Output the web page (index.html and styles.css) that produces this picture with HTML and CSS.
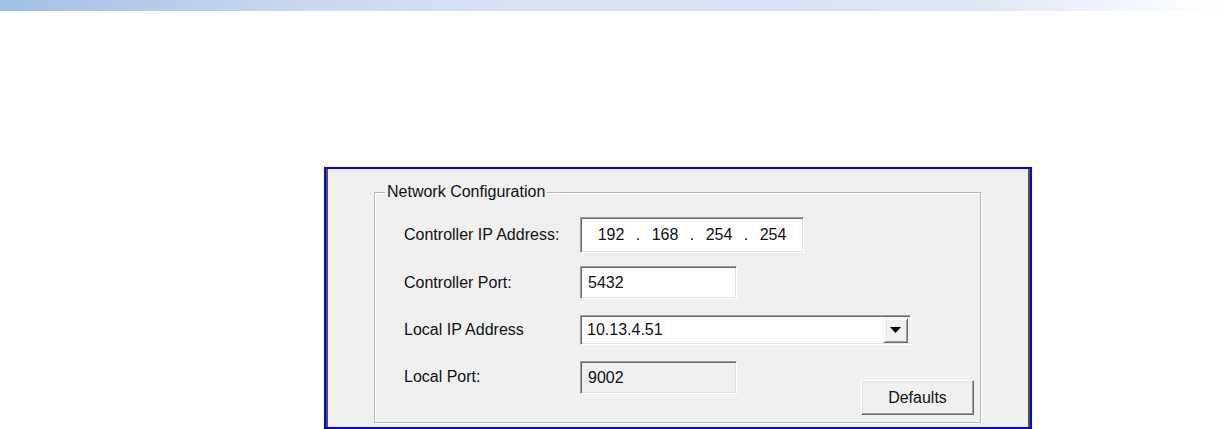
FILE: index.html
```html
<!DOCTYPE html>
<html>
<head>
<meta charset="utf-8">
<link rel="stylesheet" href="styles.css">
</head>
<body>
<div class="topbar"></div>
<div class="frame">
  <div class="frame-inner">
    <fieldset class="group">
      <legend class="legend">Network Configuration</legend>
      <div class="row row-ip">
        <span class="label">Controller IP Address:</span>
        <div class="field ip">
          <span class="oct">192</span><span class="dot">.</span>
          <span class="oct">168</span><span class="dot">.</span>
          <span class="oct">254</span><span class="dot">.</span>
          <span class="oct">254</span>
        </div>
      </div>
      <div class="row row-port">
        <span class="label">Controller Port:</span>
        <div class="field port">5432</div>
      </div>
      <div class="row row-sel">
        <span class="label">Local IP Address</span>
        <div class="field select">
          <span class="sel-text">10.13.4.51</span>
          <span class="drop"><svg width="11" height="6" viewBox="0 0 11 6"><path d="M0 0H11L5.5 6Z" fill="#000"/></svg></span>
        </div>
      </div>
      <div class="row row-local">
        <span class="label">Local Port:</span>
        <div class="field port disabled">9002</div>
        <div class="button">Defaults</div>
      </div>
    </fieldset>
  </div>
</div>
</body>
</html>
```

FILE: styles.css
```css
* { box-sizing: border-box; }
html, body {
  margin: 0;
  padding: 0;
  background: #ffffff;
  overflow: hidden;
}
body {
  font-family: "Liberation Sans", Arial, sans-serif;
  font-size: 16px;
  color: #111;
  width: 1224px;
  height: 429px;
}
.topbar {
  height: 11px;
  width: 1224px;
  background: linear-gradient(to right, #a2bfe6 0%, #c6d5ee 22%, #d8e3f4 42%, #d9e3f5 65%, #dfe8f4 80%, #ecf0fb 88%, #f6f9fe 94%, #ffffff 100%);
}
.frame {
  margin-top: 156px;
  margin-left: 324px;
  width: 708px;
  height: 262px;
  border: 2px solid #0000ff;
  background: #f0f0f0;
}
.frame-inner {
  height: 100%;
  border-left: 2px solid #505050;
  border-right: 2px solid #505050;
  padding: 14px 47px 0 46px;
}
.group {
  margin: 0;
  padding: 16px 6px 7px 29px;
  border: 1px solid #b8b8b8;
  box-shadow: inset 1px 1px 0 #ffffff, 1px 1px 0 #ffffff;
  min-width: 0;
}
.legend {
  margin-left: -19px;
  padding: 0 2px;
  line-height: 18px;
  background: #f0f0f0;
}
.row {
  display: flex;
  align-items: center;
}
.label {
  width: 176px;
  flex: none;
  line-height: 18px;
}
.field {
  flex: none;
  background: #ffffff;
  border-top: 1px solid #a0a0a0;
  border-left: 1px solid #a0a0a0;
  border-right: 1px solid #ffffff;
  border-bottom: 1px solid #ffffff;
  box-shadow: inset 1px 1px 0 #696969, inset -1px -1px 0 #e3e3e3;
  display: flex;
  align-items: center;
}
.ip {
  width: 224px;
  height: 36px;
  padding-left: 10px;
}
.oct {
  width: 40px;
  text-align: center;
}
.dot {
  width: 14px;
  text-align: center;
}
.row-port { margin-top: 13px; }
.port {
  width: 157px;
  height: 33px;
  padding-left: 7px;
}
.row-sel { margin-top: 16px; }
.select {
  width: 331px;
  height: 30px;
  padding-left: 6px;
  padding-right: 2px;
}
.sel-text { flex: 1; }
.drop {
  width: 25px;
  height: 25px;
  background: #f0f0f0;
  border-top: 1px solid #f0f0f0;
  border-left: 1px solid #f0f0f0;
  border-right: 1px solid #696969;
  border-bottom: 1px solid #696969;
  box-shadow: inset 1px 1px 0 #ffffff, inset -1px -1px 0 #a0a0a0;
  display: flex;
  align-items: center;
  justify-content: center;
}
.row-local {
  margin-top: 16px;
  align-items: flex-start;
}
.row-local .label { margin-top: 7px; }
.disabled { background: #f0f0f0; }
.button {
  margin-left: auto;
  margin-top: 19px;
  width: 113px;
  height: 35px;
  background: #f0f0f0;
  border-top: 1px solid #ffffff;
  border-left: 1px solid #ffffff;
  border-right: 1px solid #696969;
  border-bottom: 1px solid #696969;
  box-shadow: inset -1px -1px 0 #a0a0a0, inset 1px 1px 0 #e3e3e3;
  display: flex;
  align-items: center;
  justify-content: center;
}
```
